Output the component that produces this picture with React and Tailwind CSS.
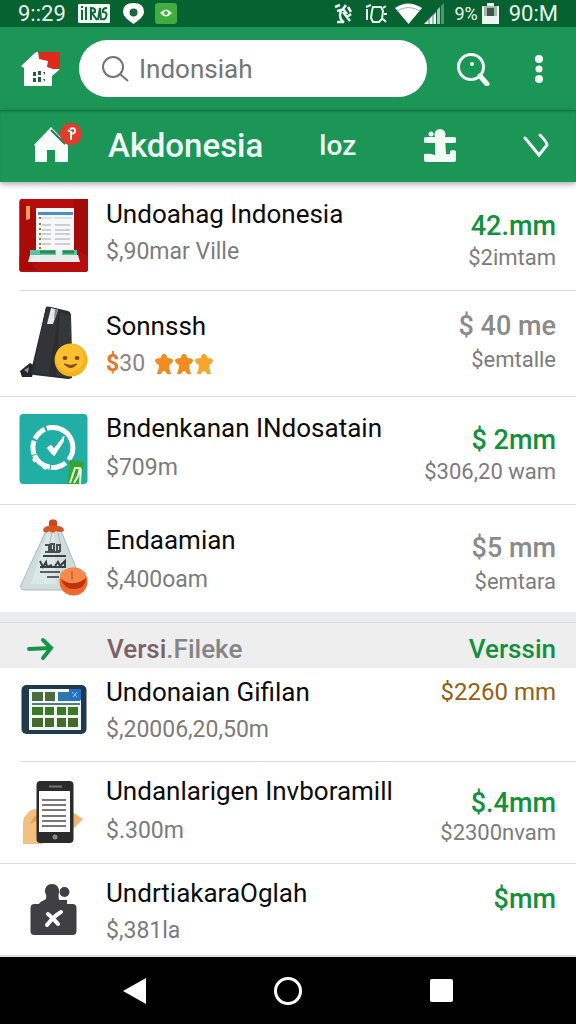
import React from 'react';

function RedBookIcon() {
  return (
    <svg className="w-full" viewBox="0 0 72 80" aria-hidden="true">
      <rect x="1.5" y="3" width="68.5" height="73" rx="2" fill="#b80d0d" />
      <path d="M1.500 60L20 74H1.500zM56 3h14v58L54 50z" fill="#a30a0a" />
      <path d="M1.500 5l18 12v50l-18 8z" fill="#a90b0b" />
      <path d="M8 10h4v13l-4 1z" fill="#f0a060" />
      <path d="M18 12h38v44H18z" fill="#f7f8fa" />
      <path d="M20 16h35v3H20z" fill="#4a8fc4" />
      <path d="M24 22h10M36 22h18" stroke="#c9ced3" />
      <path d="M24 29h9M24 34h9M24 38h9M24 43h9M24 48h9M37 29h15M37 34h15M37 38h15M37 43h15M37 48h15" stroke="#a3a7ab" />
      <path d="M21 22h2M21 28h2M21 33h2M21 38h2M21 43h2M21 48h2M21 52h2" stroke="#b5702c" strokeWidth="2" />
      <path d="M12 54h47v6H12z" fill="#5cc3a4" />
      <path d="M22 56h15M45 56h11" stroke="#2c8a4c" strokeWidth="3" />
      <path d="M38 54h6v6h-6z" fill="#e6f3ef" />
      <path d="M12 59h48l2 7H10z" fill="#e8ecec" />
    </svg>
  );
}

function SpeakerIcon() {
  return (
    <svg className="w-full" viewBox="0 0 72 80" aria-hidden="true">
      <path d="M2 69l10-8 5 3-3 11H4z" fill="#22252a" />
      <path d="M6 68l5-3-1 6z" fill="#87929b" />
      <path d="M28 5q1-1 5 0l17 4q3 1 3 5l1 60q0 3-4 3l-34-4q-4-1-3-4z" fill="#2a2c30" />
      <path d="M42 10l11 4 1 62-16-2z" fill="#35373b" />
      <path d="M28 5l13 3-10 65-16-2z" fill="#323438" />
      <path d="M33 6l7 2-5 14h-6z" fill="#e7e8ea" />
      <path d="M37 7l3 1-4 10z" fill="#7f8387" />
      <circle cx="53" cy="58" r="16.500" fill="#f6b31b" />
      <circle cx="52" cy="56" r="14" fill="#fcc02e" />
      <ellipse cx="47" cy="56" rx="2.500" ry="2" fill="#7b4a0b" />
      <ellipse cx="59" cy="56" rx="2.500" ry="2" fill="#7b4a0b" />
      <path d="M46 62q7 7 13 0-6 3-13 0z" fill="#7b4a0b" stroke="#7b4a0b" />
    </svg>
  );
}

function TealCheckIcon() {
  return (
    <svg className="w-full" viewBox="0 0 72 80" aria-hidden="true">
      <rect x="1.500" y="4" width="68" height="70" rx="4" fill="#20aea5" />
      <circle cx="35.500" cy="38" r="20" fill="none" stroke="#fff" strokeWidth="5" strokeDasharray="48 4 16 1 20 1 14 2 14 2" transform="rotate(-100 35 38)" />
      <path d="M19 26l5-5M13 39h4M15 51l5-3M26 59l2-4M34 15v4" stroke="#fff" strokeWidth="4" />
      <path d="M29 38l4-3 3 4 10-13-1 6-9 14z" fill="#fff" stroke="#fff" />
      <path d="M52 50l14 2-3 22H49z" fill="#35a72e" />
      <path d="M52 73l5-15h5l-2 8-4 7M63 58l-1 16" stroke="#e9ffe2" strokeWidth="2" fill="none" />
    </svg>
  );
}

function BagIcon() {
  return (
    <svg className="w-full" viewBox="0 0 72 80" aria-hidden="true">
      <path d="M28 13h15l22 54q1 5-4 5H7q-5 0-4-5z" fill="#cfdedd" stroke="#a9bab9" />
      <path d="M29 16l-16 50h25l-2-50z" fill="#dce8e7" />
      <path d="M34 15l-3 13M40 15l3 12" stroke="#aebdbc" />
      <rect x="31" y="1.500" width="8" height="9" rx="3" fill="#c9481d" />
      <path d="M25 13q0-5 7-5h7q7 0 7 5-4 2-8 0-3 3-7 0-3 3-6 0z" fill="#d9551f" />
      <path d="M27 27h4v6M33 26h3v6h-3zM39 27h3v6h-3zM27 34h15" stroke="#4a5052" strokeWidth="2" fill="none" />
      <path d="M25 38h23" stroke="#3b4143" strokeWidth="2" />
      <path d="M22 43l3 6 3-5 1 5 5-2M37 48l3-4 2 4 5-5v6M22 49h26" stroke="#3b4143" strokeWidth="2" fill="none" />
      <path d="M22 54h20M29 59h12" stroke="#596163" strokeWidth="2" />
      <circle cx="55.500" cy="63.500" r="14" fill="#f0682a" />
      <ellipse cx="55" cy="58" rx="13" ry="8" fill="#f58a4a" />
      <path d="M43 61q12 9 25-1-1 11-12 11-10 0-13-10z" fill="#bf3210" />
      <path d="M54 53v9" stroke="#b54d20" />
    </svg>
  );
}

function TabletIcon() {
  return (
    <svg className="w-full" viewBox="0 0 72 80" aria-hidden="true">
      <rect x="3.500" y="11" width="65" height="49" rx="5" fill="#1e3a4c" />
      <rect x="11" y="15" width="52" height="41" fill="#f2f6f3" />
      <path d="M14 18h11v9H14zM27 18h10v9H27z" fill="#4c6c40" />
      <path d="M40 18h22v9H40z" fill="#2f78aa" />
      <path d="M51 15h12v11H51z" fill="#2470cf" />
      <path d="M54 18l5 5M59 18l-4 5" stroke="#9bd0ff" />
      <path d="M14 30h48" stroke="#557a88" strokeWidth="2" />
      <path d="M14 33h11v8H14zM27 33h9v8h-9zM39 33h9v8h-9zM50 33h10v8H50z" fill="#397a24" />
      <path d="M14 44h11v9H14zM27 44h9v9h-9zM39 44h9v9h-9zM50 44h10v9H50z" fill="#446b2b" />
    </svg>
  );
}

function PhoneIcon() {
  return (
    <svg className="w-full" viewBox="0 0 72 80" aria-hidden="true">
      <path d="M5 71V50q0-6 5-10 2-4 9-4h6v35z" fill="#f4c080" />
      <path d="M19 42q-7 4-6 9 3-3 7-3z" fill="#e0a263" />
      <path d="M53 38l12 8-12 12z" fill="#eeb674" />
      <rect x="18.500" y="8" width="37" height="62" rx="4" fill="#2b2b2c" />
      <path d="M21 18h31v41H21z" fill="#fff" />
      <path d="M31 13.500h13" stroke="#777" strokeWidth="2" />
      <path d="M24 27h24M24 32h24M24 37h24M24 43h24M24 48h24M24 53h24" stroke="#4c4c4f" strokeWidth="1.500" />
      <circle cx="37" cy="64" r="2.500" fill="#8b8b8b" />
    </svg>
  );
}

function BriefcaseIcon() {
  return (
    <svg className="w-full" viewBox="0 0 72 80" aria-hidden="true">
      <rect x="12.500" y="33" width="46" height="31" rx="4" fill="#404043" />
      <path d="M20 34q3-4 8-6 1-3-1-7 0-8 7-8t7 8q-1 4 0 8h8v5z" fill="#404043" />
      <circle cx="46.500" cy="21" r="5" fill="#404043" />
      <path d="M30 43q6 5 10 10M43 41Q36 45 29 54" stroke="#fff" strokeWidth="4" strokeLinecap="round" fill="none" />
    </svg>
  );
}

function StarFigure({ className }) {
  return (
    <svg className={className} viewBox="0 0 18 22" aria-hidden="true">
      <path d="M9 1q3 0 3 4 5 0 6 2 0 3-4 5 0 4 2 9h-4q-1-3-3-3t-3 3H2q2-5 2-9-4-2-4-5 1-2 6-2 0-4 3-4z" fill="currentColor" />
    </svg>
  );
}

function ListRow({ item }) {
  const Icon = item.icon;
  return (
    <li className={`relative flex items-start gap-4 pl-[18px] pr-5 ${item.rowClass}`}>
      <div className={`w-[72px] shrink-0 ${item.iconClass}`}>
        <Icon />
      </div>
      <div className={`flex min-w-0 flex-1 flex-col ${item.leftClass}`}>
        <h3 className="whitespace-nowrap text-[26px] leading-8 text-[#0c0c0c]">{item.title}</h3>
        {item.rating ? (
          <p className="flex items-center text-[23px] leading-7 text-[#8d8383]">
            <span className="font-bold text-[#e5762a]">$</span>
            {item.sub}
            <span className="ml-2.5 flex gap-0.5">
              <StarFigure className="h-[22px] w-[18px] text-[#f28c1e]" />
              <StarFigure className="h-[22px] w-[18px] text-[#f28c1e]" />
              <StarFigure className="h-[22px] w-[18px] text-[#f7a52c]" />
            </span>
          </p>
        ) : (
          <p className="whitespace-nowrap text-[23px] leading-7 text-[#7c7c7c]">{item.sub}</p>
        )}
      </div>
      <div className={`flex shrink-0 flex-col items-end whitespace-nowrap ${item.rightClass}`}>
        <span className={item.priceClass}>{item.price}</span>
        {item.note && <span className="text-[22px] leading-7 text-[#7c7c7c]">{item.note}</span>}
      </div>
    </li>
  );
}

const GREEN_PRICE = 'text-[27px] leading-8 font-medium text-[#11913c]';
const GRAY_PRICE = 'text-[27px] leading-8 font-medium text-[#8a8a8a]';
const AMBER_PRICE = 'text-2xl leading-8 text-[#94600f]';

const topItems = [
  {
    icon: RedBookIcon, title: 'Undoahag Indonesia', sub: '$,90mar Ville', price: '42.mm', note: '$2imtam',
    rowClass: 'min-h-[108px]', iconClass: 'pt-3.5', leftClass: 'pt-4 gap-2', rightClass: 'pt-7 gap-0.5', priceClass: GREEN_PRICE,
  },
  {
    icon: SpeakerIcon, title: 'Sonnssh', sub: '30', rating: true, price: '$ 40 me', note: '$emtalle',
    rowClass: 'min-h-[106px] before:absolute before:top-0 before:right-0 before:left-5 before:h-px before:bg-[#dcdfe2]',
    iconClass: 'pt-3', leftClass: 'pt-5 gap-2', rightClass: 'pt-5 gap-1', priceClass: GRAY_PRICE,
  },
  {
    icon: TealCheckIcon, title: 'Bndenkanan INdosatain', sub: '$709m', price: '$ 2mm', note: '$306,20 wam',
    rowClass: 'min-h-[108px] before:absolute before:inset-x-0 before:top-0 before:h-px before:bg-[#dcdfe2]',
    iconClass: 'pt-3.5', leftClass: 'pt-4 gap-2.5', rightClass: 'pt-7 gap-0.5', priceClass: GREEN_PRICE,
  },
  {
    icon: BagIcon, title: 'Endaamian', sub: '$,400oam', price: '$5 mm', note: '$emtara',
    rowClass: 'min-h-[108px] before:absolute before:inset-x-0 before:top-0 before:h-px before:bg-[#dcdfe2]',
    iconClass: 'pt-3.5', leftClass: 'pt-5 gap-2.5', rightClass: 'pt-7 gap-1', priceClass: GRAY_PRICE,
  },
];

const bottomItems = [
  {
    icon: TabletIcon, title: 'Undonaian Gifilan', sub: '$,20006,20,50m', price: '$2260 mm',
    rowClass: 'min-h-[93px]', iconClass: 'pt-1.5', leftClass: 'pt-2 gap-2', rightClass: 'pt-2', priceClass: AMBER_PRICE,
  },
  {
    icon: PhoneIcon, title: 'Undanlarigen Invboramill', sub: '$.300m', price: '$.4mm', note: '$2300nvam',
    rowClass: 'min-h-[102px] before:absolute before:top-0 before:right-0 before:left-5 before:h-px before:bg-[#dcdfe2]',
    iconClass: 'pt-3', leftClass: 'pt-3.5 gap-2.5', rightClass: 'pt-[26px]', priceClass: GREEN_PRICE,
  },
  {
    icon: BriefcaseIcon, title: 'UndrtiakaraOglah', sub: '$,381la', price: '$mm',
    rowClass: 'min-h-[94px] border-b-2 border-[#dcdfe2] before:absolute before:inset-x-0 before:top-0 before:h-px before:bg-[#dcdfe2]',
    iconClass: 'pt-2', leftClass: 'pt-3.5 gap-2', rightClass: 'pt-5', priceClass: GREEN_PRICE,
  },
];

function StatusBar() {
  return (
    <div className="flex h-[27px] items-center bg-[#066231] pr-[18px] pl-[18px] text-[22px] leading-6 text-[#e9f7ee]">
      <span>9::29</span>
      <svg className="ml-3 h-[19px] w-8" viewBox="0 0 32 19" aria-hidden="true">
        <rect width="32" height="19" rx="1" fill="#f0faf3" />
        <path d="M3 3h2M4 6v10M8 3v13M13 16V4q5 0 4 4l-3 1 5 7M20 16l2-12 1 12M29 4q-5 0-4 4 5 0 3 5-1 3-4 2" stroke="#0c6a37" strokeWidth="2" fill="none" />
      </svg>
      <svg className="ml-3 h-[21px] w-[23px]" viewBox="0 0 23 21" aria-hidden="true">
        <path d="M11.500 0Q22 0 22 9q0 5-10.500 12Q1 14 1 9q0-9 10.500-9z" fill="#fff" />
        <circle cx="11.500" cy="9.500" r="4" fill="#23633f" />
      </svg>
      <svg className="ml-2.5 h-[21px] w-[22px]" viewBox="0 0 22 21" aria-hidden="true">
        <rect width="22" height="21" rx="3" fill="#3fae3f" />
        <path d="M5 10q6-7 12 0-6 7-12 0z" fill="#eaffdf" />
        <circle cx="11" cy="10" r="2" fill="#3fae3f" />
      </svg>

      <div className="ml-auto flex items-center">
        <svg className="h-[21px] w-[19px]" viewBox="0 0 19 21" fill="none" stroke="currentColor" strokeWidth="2.500" aria-hidden="true">
          <path d="M1 4l5-2M3 8l4-1-1 5q0 5 4 7H3M12 2l-3 4 4 5M9 9l7 9M14 4l3 5M13 14l4-3" />
        </svg>
        <svg className="ml-3 h-[21px] w-[22px]" viewBox="0 0 22 21" fill="none" stroke="currentColor" strokeWidth="2" aria-hidden="true">
          <path d="M2 6v11M1 4l5-2M8 4h8l2 4-1 8-3 3H8l-2-4 1-7zM18 5l3-2M19 11h3M18 16l3 3" />
        </svg>
        <svg className="ml-2 h-[21px] w-[27px]" viewBox="0 0 27 21" aria-hidden="true">
          <path d="M0 5q13-9 27 0L13.500 21z" fill="#fff" />
          <path d="M2 8q11-7 23 0" stroke="#8dbb9f" fill="none" />
        </svg>
        <svg className="ml-0.5 h-[21px] w-5" viewBox="0 0 20 21" aria-hidden="true">
          <path d="M0 21l12-12v12z" fill="#fff" />
          <path d="M5 15v6M9 11v10" stroke="#3c875a" />
          <path d="M13 7l3-3v17h-3z" fill="#a3cbb2" />
          <path d="M17 3l3-3v21h-3z" fill="#4e936c" />
        </svg>
        <span className="ml-2.5 text-lg leading-6">9%</span>
        <svg className="ml-1 h-[21px] w-[17px]" viewBox="0 0 17 21" aria-hidden="true">
          <path d="M5 0h7v3h5v18H0V3h5z" fill="#eef5f0" />
          <path d="M2 3h13v10H2z" fill="#a4b9ab" />
          <path d="M5 5h7v8H5z" fill="#3f5548" />
        </svg>
        <span className="ml-2.5">90:M</span>
      </div>
    </div>
  );
}

function SearchHeader() {
  return (
    <header className="flex h-[83px] items-center bg-[#1b9657] pr-[27px] pl-5">
      <button type="button" aria-label="Home" className="shrink-0">
        <svg className="h-9 w-[42px]" viewBox="0 0 42 36" aria-hidden="true">
          <path d="M18 1h22v18H24z" fill="#dc2a1c" />
          <path d="M1 15L16 1l2 0 1 7 9 2-1 6 6 2h7l-8 7v10H4V17z" fill="#fff" />
          <path d="M13 21h3v4h-3zM18 20h3v4h-3zM13 27h3v4h-3zM18 26h3v5h-3zM23 21h2v3M23 28h2v3" fill="#28613f" />
        </svg>
      </button>
      <div className="ml-[17px] flex h-[57px] min-w-0 flex-1 items-center rounded-full bg-white pl-[22px]">
        <svg className="h-7 w-7 shrink-0" viewBox="0 0 28 28" fill="none" stroke="#747474" strokeWidth="2" aria-hidden="true">
          <circle cx="12" cy="12" r="10" />
          <path d="M19 19l8 7" />
        </svg>
        <input
          type="text"
          aria-label="Search"
          defaultValue="Indonsiah"
          className="ml-2.5 h-10 w-full min-w-0 bg-transparent text-[26px] leading-8 text-[#757575] outline-none"
        />
      </div>
      <button type="button" aria-label="Search" className="ml-[29px] shrink-0">
        <svg className="h-[34px] w-[34px]" viewBox="0 0 34 34" fill="none" stroke="#f1fcf6" aria-hidden="true">
          <circle cx="15" cy="15" r="12.500" strokeWidth="3" />
          <path d="M24 24l7 8" strokeWidth="5" strokeLinecap="round" />
          <circle cx="16" cy="12" r="1" strokeWidth="2" />
        </svg>
      </button>
      <button type="button" aria-label="More options" className="ml-[39px] shrink-0">
        <svg className="h-7 w-5" viewBox="0 0 20 28" fill="#f1fcf6" aria-hidden="true">
          <circle cx="10" cy="4" r="4" />
          <circle cx="10" cy="14" r="3.500" />
          <circle cx="10" cy="24" r="4" />
        </svg>
      </button>
    </header>
  );
}

function TabBar() {
  return (
    <nav className="relative flex h-[72px] items-center bg-[#1b9657] pr-[27px] pl-8 text-[#f1fcf6] shadow-[inset_0_3px_3px_-2px_rgba(0,60,30,0.5),0_2px_6px_rgba(0,0,0,0.35)]">
      <a href="#home" aria-label="Home" className="block w-[52px] shrink-0">
        <svg className="h-[46px] w-[52px]" viewBox="0 0 52 46" aria-hidden="true">
          <path d="M2 22L19 4l17 18v17H23V27h-8v12H3V23z" fill="#f8fffb" />
          <path d="M19 7l14 14" stroke="#1b7c4b" strokeWidth="2" />
          <circle cx="39" cy="11" r="11" fill="#e33b2b" />
          <path d="M36 7l3 2v8M39 11q5-1 4-4t-5-1" stroke="#fff" strokeWidth="2" fill="none" />
        </svg>
      </a>
      <h1 className="ml-6 text-[33px] leading-10 font-medium">Akdonesia</h1>
      <div className="ml-14 flex flex-1 items-center justify-between">
        <a href="#loz" className="text-[28px] leading-8 font-medium">loz</a>
        <a href="#extensions" aria-label="Extensions">
          <svg className="h-[34px] w-[34px]" viewBox="0 0 34 34" fill="currentColor" aria-hidden="true">
            <circle cx="8" cy="5" r="2.500" />
            <circle cx="17" cy="5.500" r="5.500" />
            <rect x="1" y="8" width="32" height="6" rx="1.500" />
            <path d="M12 8h10l1 17h4v-2q0-2 3-2t3 2v8q0 2-2 2H3q-2 0-2-2v-6q5-1 11 1z" />
          </svg>
        </a>
        <button type="button" aria-label="Expand">
          <svg className="h-[26px] w-[26px]" viewBox="0 0 26 26" fill="none" stroke="currentColor" strokeWidth="3" strokeLinecap="round" aria-hidden="true">
            <path d="M2 5l14 17 8-10q0-3-7-10" />
          </svg>
        </button>
      </div>
    </nav>
  );
}

export default function App() {
  return (
    <div className="w-full bg-white font-['Roboto',sans-serif]">
      <StatusBar />
      <SearchHeader />
      <TabBar />

      <main>
        <ul>
          {topItems.map((item) => (
            <ListRow key={item.title} item={item} />
          ))}
        </ul>

        {/* Section header */}
        <div className="h-2.5 bg-[#ebecee]" />
        <div className="flex h-[46px] items-center border-t border-[#dbdde1] bg-[#eeeeef] pt-1.5 pr-5 pl-[26px] text-[26px] leading-8 font-medium">
          <svg className="h-6 w-7" viewBox="0 0 28 24" fill="none" stroke="#15954a" strokeWidth="4" strokeLinecap="round" aria-hidden="true">
            <path d="M3 12l22-1M17 3l8 8-8 10" />
          </svg>
          <h2 className="ml-[53px] text-[#858585]">
            <span className="text-[#7b6266]">Versi</span>.Fileke
          </h2>
          <a href="#version" className="ml-auto text-[#11913c]">Verssin</a>
        </div>

        <ul>
          {bottomItems.map((item) => (
            <ListRow key={item.title} item={item} />
          ))}
        </ul>
      </main>

      {/* Android navigation */}
      <footer className="grid h-[67px] grid-cols-3 items-center bg-black px-[58px]">
        <button type="button" aria-label="Back" className="flex justify-center">
          <svg className="h-[26px] w-6" viewBox="0 0 24 26" aria-hidden="true">
            <path d="M23 0v26L0 13z" fill="#fff" />
          </svg>
        </button>
        <button type="button" aria-label="Home" className="flex justify-center">
          <span className="block h-7 w-7 rounded-full border-[3px] border-white" />
        </button>
        <button type="button" aria-label="Recent apps" className="flex justify-center">
          <span className="block h-[23px] w-[23px] rounded-xs bg-white" />
        </button>
      </footer>
    </div>
  );
}
